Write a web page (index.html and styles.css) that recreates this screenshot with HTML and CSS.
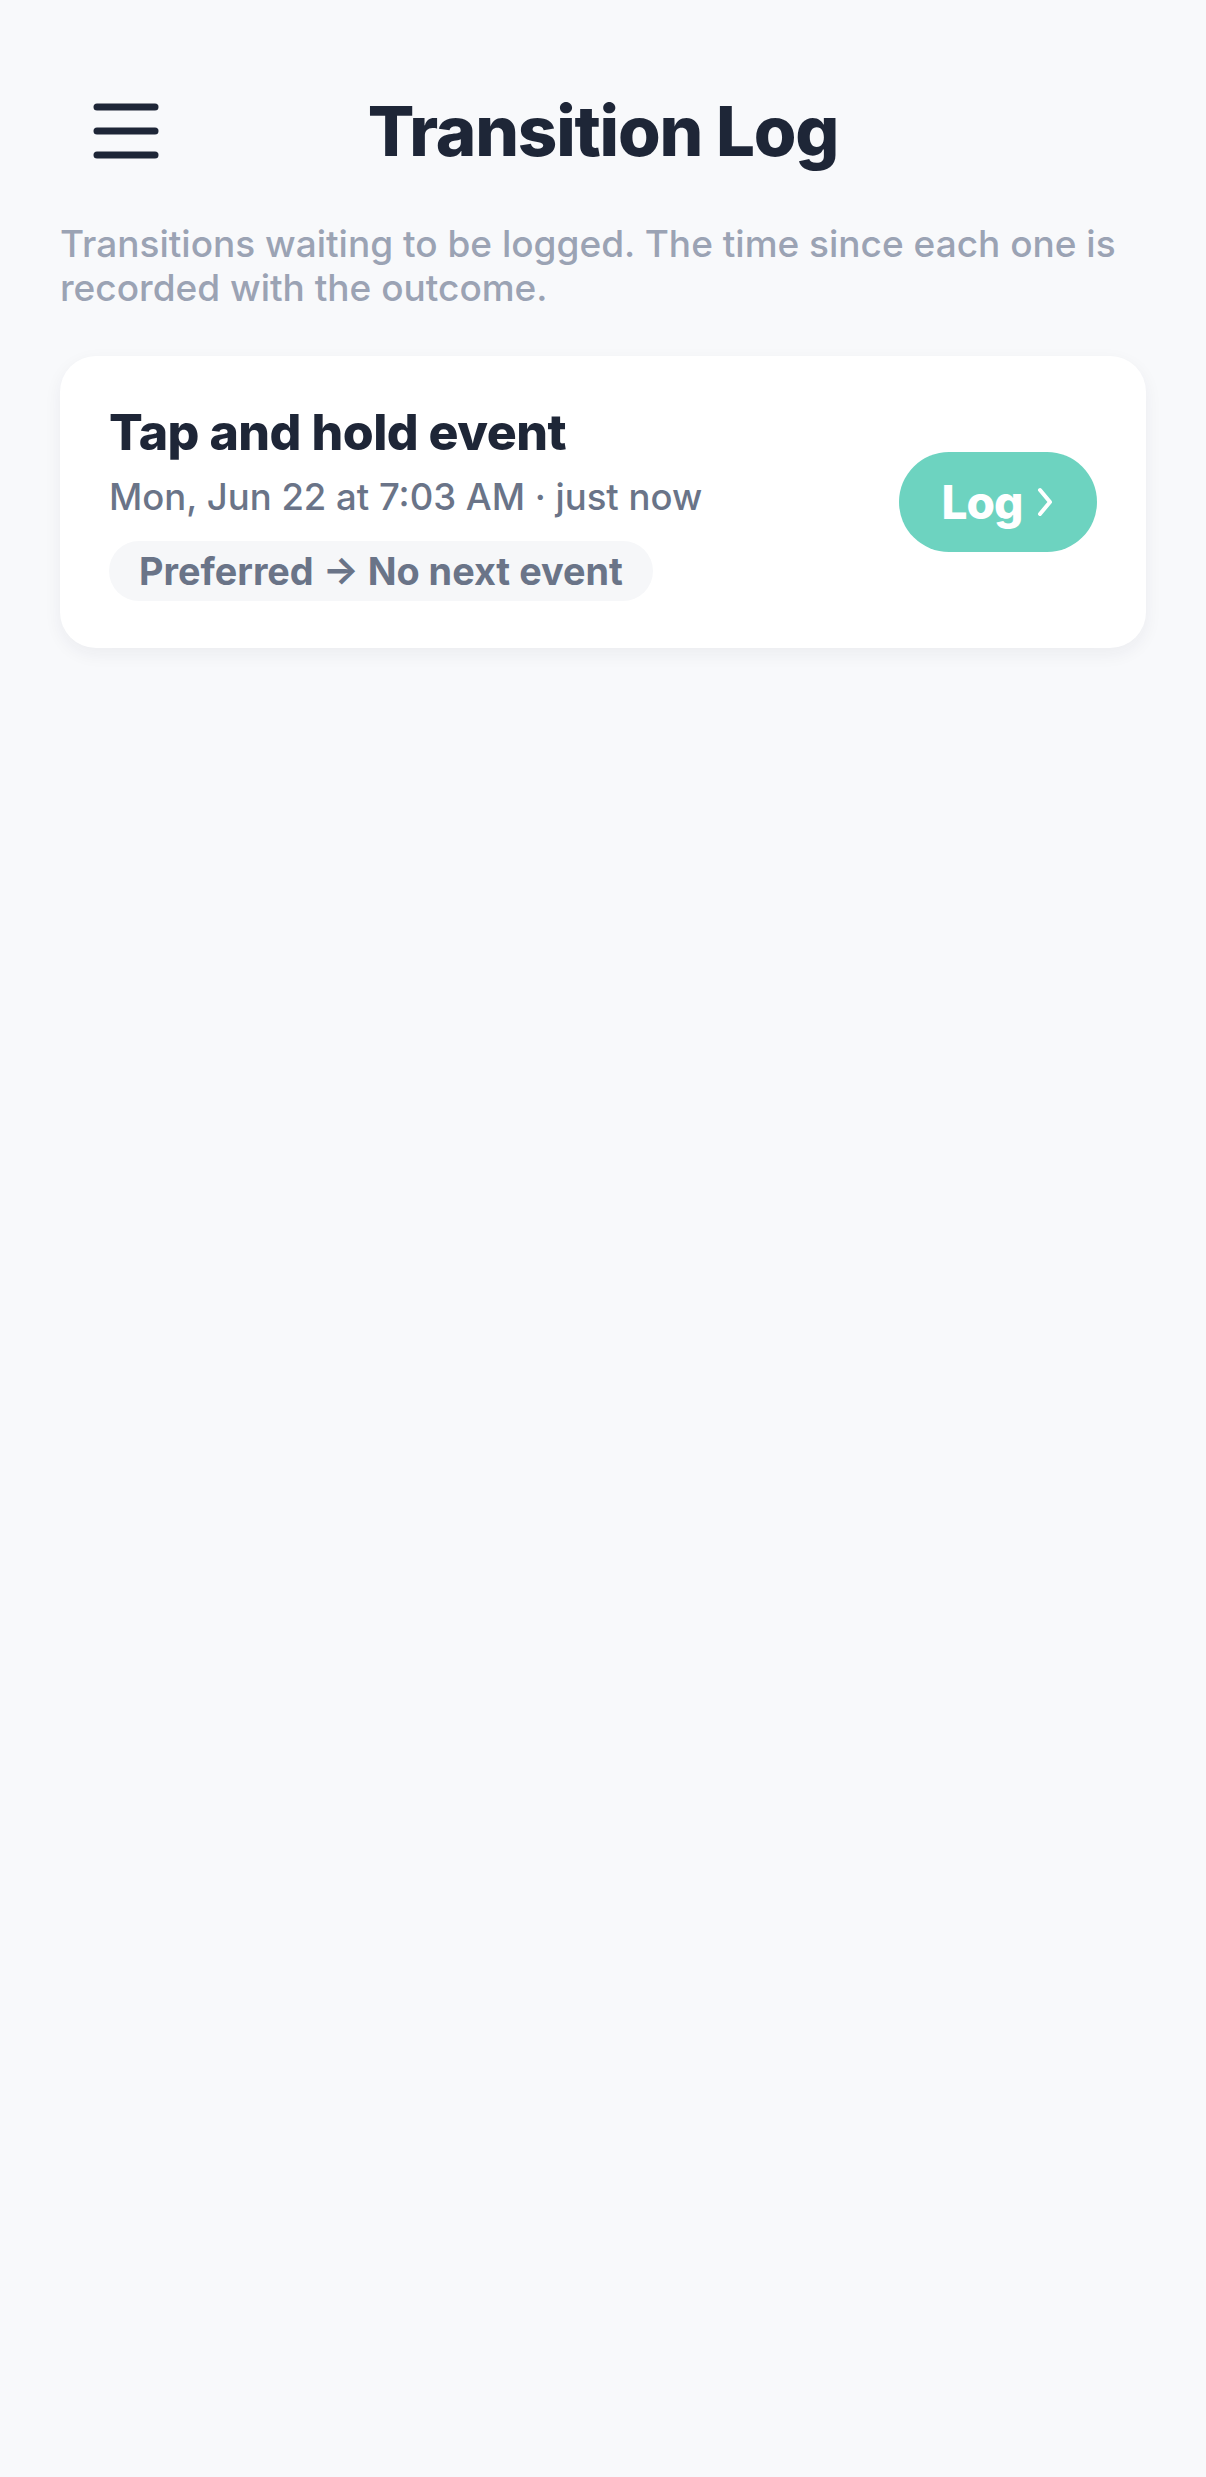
FILE: index.html
```html
<!DOCTYPE html>
<html lang="en">
<head>
  <meta charset="UTF-8">
  <title>Transition Log</title>
  <link rel="stylesheet" href="styles.css">
</head>
<body>
  <header class="topbar">
    <button class="menu-btn" aria-label="Menu">
      <svg width="66" height="56" viewBox="0 0 66 56">
        <line x1="4" y1="4" x2="62" y2="4" />
        <line x1="4" y1="28" x2="62" y2="28" />
        <line x1="4" y1="52" x2="62" y2="52" />
      </svg>
    </button>
    <h1>Transition Log</h1>
    <span class="spacer"></span>
  </header>

  <p class="intro">Transitions waiting to be logged. The time since each one is recorded with the outcome.</p>

  <div class="pending-list">
    <div class="pending-card">
      <div class="pending-info">
        <h3>Tap and hold event</h3>
        <div class="when">Mon, Jun 22 at 7:03 AM · just now</div>
        <span class="route">Preferred → No next event</span>
      </div>
      <button class="log-btn">Log
        <svg width="18" height="32" viewBox="0 0 18 32">
          <polyline points="4,4 14,16 4,28" />
        </svg>
      </button>
    </div>
  </div>
</body>
</html>
```

FILE: styles.css
```css
body {
  font-family: Inter, "Noto Sans", sans-serif;
  margin: 0;
  padding: 0;
  background-color: #f8f9fb;
  color: #1e2637;
}

.topbar {
  display: grid;
  grid-template-columns: 200px 1fr 200px;
  align-items: center;
  padding: 98px 60px 0;
}

.menu-btn {
  background: none;
  border: none;
  padding: 0;
  margin-left: 33px;
  width: 66px;
  height: 56px;
  display: flex;
}

.menu-btn line {
  stroke: #1e2637;
  stroke-width: 7;
  stroke-linecap: round;
}

.topbar h1 {
  margin: 0;
  text-align: center;
  font-size: 69px;
  font-weight: 800;
  letter-spacing: -1.2px;
  line-height: 66px;
}

.intro {
  margin: 58px 60px 0;
  font-size: 37px;
  line-height: 44px;
  font-weight: 500;
  color: #9ba3b4;
}

.pending-list {
  padding: 46px 60px;
}

.pending-card {
  background: white;
  border-radius: 36px;
  padding: 47px 49px;
  display: flex;
  align-items: center;
  justify-content: space-between;
  box-shadow: 0 6px 18px rgba(30, 40, 60, 0.06);
}

.pending-info h3 {
  margin: 0;
  font-size: 50px;
  line-height: 58px;
  font-weight: 800;
  letter-spacing: -0.5px;
}

.when {
  margin-top: 14px;
  font-size: 36.5px;
  line-height: 44px;
  font-weight: 500;
  color: #6a7488;
}

.route {
  display: inline-block;
  margin-top: 22px;
  background: #f6f7f9;
  border-radius: 31px;
  padding: 9px 30px 8px;
  font-size: 37.8px;
  line-height: 43px;
  font-weight: 700;
  color: #6a7488;
}

.log-btn {
  background: #6dd3c0;
  border: none;
  border-radius: 50px;
  width: 198px;
  height: 100px;
  display: flex;
  align-items: center;
  justify-content: center;
  gap: 14px;
  font-family: Inter, sans-serif;
  font-size: 46px;
  font-weight: 800;
  color: white;
  letter-spacing: -1px;
}

.log-btn polyline {
  fill: none;
  stroke: white;
  stroke-width: 4;
  stroke-linecap: round;
  stroke-linejoin: round;
}
```
